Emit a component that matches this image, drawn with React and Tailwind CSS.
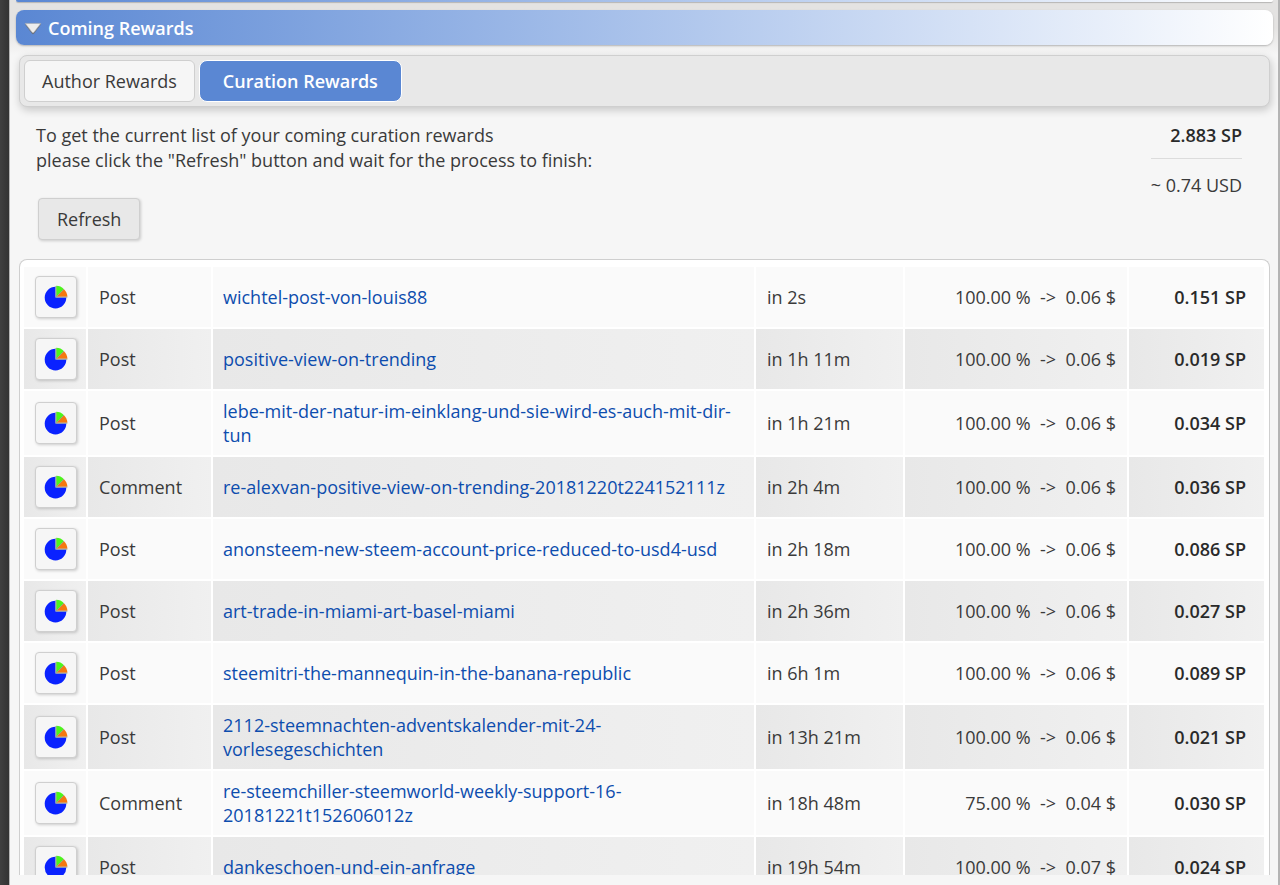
import React from "react";

const rewards = [
  { type: "Post", link: "wichtel-post-von-louis88", time: "in 2s", percent: "100.00 %", usd: "0.06 $", sp: "0.151 SP" },
  { type: "Post", link: "positive-view-on-trending", time: "in 1h 11m", percent: "100.00 %", usd: "0.06 $", sp: "0.019 SP" },
  { type: "Post", link: "lebe-mit-der-natur-im-einklang-und-sie-wird-es-auch-mit-dir-tun", time: "in 1h 21m", percent: "100.00 %", usd: "0.06 $", sp: "0.034 SP" },
  { type: "Comment", link: "re-alexvan-positive-view-on-trending-20181220t224152111z", time: "in 2h 4m", percent: "100.00 %", usd: "0.06 $", sp: "0.036 SP" },
  { type: "Post", link: "anonsteem-new-steem-account-price-reduced-to-usd4-usd", time: "in 2h 18m", percent: "100.00 %", usd: "0.06 $", sp: "0.086 SP" },
  { type: "Post", link: "art-trade-in-miami-art-basel-miami", time: "in 2h 36m", percent: "100.00 %", usd: "0.06 $", sp: "0.027 SP" },
  { type: "Post", link: "steemitri-the-mannequin-in-the-banana-republic", time: "in 6h 1m", percent: "100.00 %", usd: "0.06 $", sp: "0.089 SP" },
  { type: "Post", link: "2112-steemnachten-adventskalender-mit-24-vorlesegeschichten", time: "in 13h 21m", percent: "100.00 %", usd: "0.06 $", sp: "0.021 SP" },
  { type: "Comment", link: "re-steemchiller-steemworld-weekly-support-16-20181221t152606012z", time: "in 18h 48m", percent: "75.00 %", usd: "0.04 $", sp: "0.030 SP" },
  { type: "Post", link: "dankeschoen-und-ein-anfrage", time: "in 19h 54m", percent: "100.00 %", usd: "0.07 $", sp: "0.024 SP" },
];

function PieIcon() {
  return (
    <svg viewBox="0 0 24 24" className="size-6" aria-hidden="true">
      <path d="M11.5 1.8 A10.8 10.8 0 1 0 22.3 12.6 L11.5 12.6 Z" fill="#0a22ff" />
      <path d="M12.2 0.8 A10.8 10.8 0 0 1 20 4.2 L12.2 11.8 Z" fill="#4df51c" />
      <path d="M20 4.2 A10.8 10.8 0 0 1 23.4 11.8 L12.4 11.8 Z" fill="#f5780f" />
      <path d="M11.9 1 V12.2 H23.4 M12.2 11.9 L20 4.2" fill="none" stroke="#8f9a8a" strokeWidth="0.8" />
    </svg>
  );
}

function TriangleIcon() {
  return (
    <svg viewBox="0 0 18 14" className="h-3.5 w-4.5" aria-hidden="true">
      <path d="M0.8 3.2 H17.2 L10.2 12.6 Q9 13.8 7.8 12.6 Z" fill="#6b6b6b" opacity="0.8" />
      <path d="M1.2 2.4 H16.8 L10 11.2 Q9 12.4 8 11.2 Z" fill="#ededed" stroke="#a9a9a9" strokeWidth="0.6" />
    </svg>
  );
}

function RewardRow({ reward, shaded }) {
  const cell = shaded ? "h-[60px] py-2 bg-linear-to-r from-[#e8e8e8] to-[#f0f0f0]" : "h-[60px] py-2 bg-[#fafafa]";
  return (
    <tr>
      <td className={`${cell} pl-[11px]`}>
        <button
          type="button"
          aria-label={`Details for ${reward.link}`}
          className="flex size-[42px] items-center justify-center rounded border border-[#cfcfcf] bg-[#f6f6f6] shadow-[1px_1px_3px_rgba(0,0,0,0.18)]"
        >
          <PieIcon />
        </button>
      </td>
      <td className={`${cell} pl-[11px]`}>{reward.type}</td>
      <td className={`${cell} px-2.5`}>
        <a href={`#${reward.link}`} className="text-[#0d4dae]">{reward.link}</a>
      </td>
      <td className={`${cell} pl-[11px]`}>{reward.time}</td>
      <td className={`${cell} pr-[11px] text-right whitespace-pre`}>{`${reward.percent}  ->  ${reward.usd}`}</td>
      <td className={`${cell} pr-[18px] text-right font-semibold text-[#2a2a2a]`}>{reward.sp}</td>
    </tr>
  );
}

export default function App() {
  return (
    <div className="flex h-screen overflow-hidden bg-[#f6f6f6] font-['Open_Sans','Noto_Sans',sans-serif] text-[18px] leading-6 text-[#3a3a3a]">
      <aside className="w-2.5 shrink-0 border-r border-[#b5b5b5] bg-linear-to-r from-[#404040] to-[#333333]" />
      <main className="flex min-w-0 flex-1 flex-col border-r-2 border-[#b4b4b4] pb-2.5">
        <div className="flex shrink-0 flex-col gap-2 bg-linear-to-b from-[#e4e3e2] from-50% to-[#f6f6f6] pr-[5px] pb-2.5 pl-1.5">
          <div className="h-0.5 rounded-b-lg bg-linear-to-r from-[#5a87d3] to-white shadow-[0_1px_1px_rgba(0,0,0,0.2)]" />
          <h2 className="rounded-lg bg-linear-to-r from-[#5a87d3] to-white shadow-[0_1px_2px_rgba(0,0,0,0.25)]">
            <button type="button" aria-expanded="true" className="flex h-[35px] w-full items-center gap-1.5 pl-2 font-semibold text-white">
              <TriangleIcon />
              Coming Rewards
            </button>
          </h2>
        </div>

        <div role="tablist" className="mr-2 ml-[9px] flex shrink-0 gap-1 rounded-lg border border-[#cfcfcf] bg-[#e8e8e8] p-1 shadow-[1px_3px_8px_rgba(0,0,0,0.2)]">
          <button type="button" role="tab" aria-selected="false" className="h-[42px] rounded-md border border-[#cfcfcf] bg-[#f6f6f6] px-[17px]">
            Author Rewards
          </button>
          <button type="button" role="tab" aria-selected="true" className="h-[42px] rounded-lg border border-white bg-[#5a87d3] px-[23px] font-semibold text-white">
            Curation Rewards
          </button>
        </div>

        <section className="flex shrink-0 items-start justify-between pt-4 pr-9 pb-[19px] pl-6.5">
          <div>
            <p className="leading-[25px]">
              To get the current list of your coming curation rewards
              <br />
              please click the "Refresh" button and wait for the process to finish:
            </p>
            <button type="button" className="mt-[25px] ml-0.5 h-[42px] rounded border border-[#cfcfcf] bg-[#e8e8e8] px-[18px] shadow-[1px_1px_3px_rgba(0,0,0,0.18)]">
              Refresh
            </button>
          </div>
          <div className="text-right">
            <div className="border-b border-[#dcdcdc] pb-[11px] font-semibold text-[#2a2a2a]">2.883 SP</div>
            <div className="pt-3.5">~ 0.74 USD</div>
          </div>
        </section>

        <div className="mr-2 ml-[9px] min-h-0 flex-1 overflow-hidden rounded-t-lg border border-b-0 border-[#cfcfcf] bg-white py-[5px] pr-[3px] pl-0.5">
          <table className="w-full table-fixed border-separate border-spacing-0.5">
            <colgroup>
              <col className="w-[62px]" />
              <col className="w-[123px]" />
              <col />
              <col className="w-[147px]" />
              <col className="w-[222px]" />
              <col className="w-[135px]" />
            </colgroup>
            <tbody>
              {rewards.map((reward, index) => (
                <RewardRow key={reward.link} reward={reward} shaded={index % 2 === 1} />
              ))}
            </tbody>
          </table>
        </div>
      </main>
    </div>
  );
}
